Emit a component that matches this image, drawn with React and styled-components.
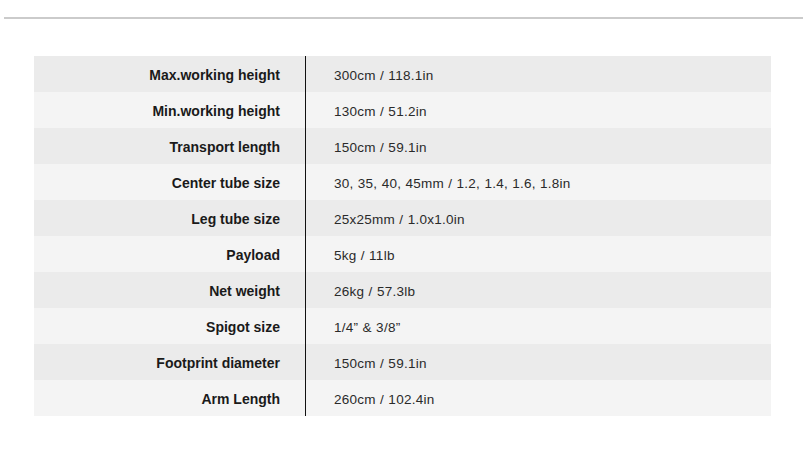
import React from "react";
import styled, { createGlobalStyle } from "styled-components";

const Global = createGlobalStyle`
  html, body { margin: 0; padding: 0; background: #fff; }
  body { font-family: "Liberation Sans", Arial, Helvetica, sans-serif; }
`;

const Page = styled.div`
  width: 811px;
  height: 473px;
  overflow: hidden;
  padding-top: 17px;
  box-sizing: border-box;
`;

const Rule = styled.div`
  height: 2px;
  background: #cbcbcb;
  margin: 0 8px 0 4px;
`;

const Table = styled.div`
  margin: 37px 0 0 34px;
  width: 737px;
  display: flex;
  flex-direction: column;
`;

const Row = styled.div`
  display: grid;
  grid-template-columns: 271px 1px 1fr;
  height: 36px;
  align-items: center;
  background: ${(p) => (p.$alt ? "#f4f4f4" : "#ebebeb")};
`;

const Label = styled.div`
  text-align: right;
  padding: 2px 25px 0 0;
  font-size: 14px;
  font-weight: 700;
  color: #1a1a1a;
`;

const Divider = styled.div`
  align-self: stretch;
  background: #111;
`;

const Value = styled.div`
  padding: 2px 0 0 28px;
  font-size: 13.5px;
  color: #2a2a2a;
  letter-spacing: 0.25px;
  word-spacing: 0.3px;
`;

const specs = [
  ["Max.working height", "300cm / 118.1in"],
  ["Min.working height", "130cm / 51.2in"],
  ["Transport length", "150cm / 59.1in"],
  ["Center tube size", "30, 35, 40, 45mm / 1.2, 1.4, 1.6, 1.8in"],
  ["Leg tube size", "25x25mm / 1.0x1.0in"],
  ["Payload", "5kg / 11lb"],
  ["Net weight", "26kg / 57.3lb"],
  ["Spigot size", "1/4\u201d & 3/8\u201d"],
  ["Footprint diameter", "150cm / 59.1in"],
  ["Arm Length", "260cm / 102.4in"],
];

export default function App() {
  return (
    <Page>
      <Global />
      <Rule />
      <Table>
        {specs.map(([k, v], i) => (
          <Row key={k} $alt={i % 2 === 1}>
            <Label>{k}</Label>
            <Divider />
            <Value>{v}</Value>
          </Row>
        ))}
      </Table>
    </Page>
  );
}
